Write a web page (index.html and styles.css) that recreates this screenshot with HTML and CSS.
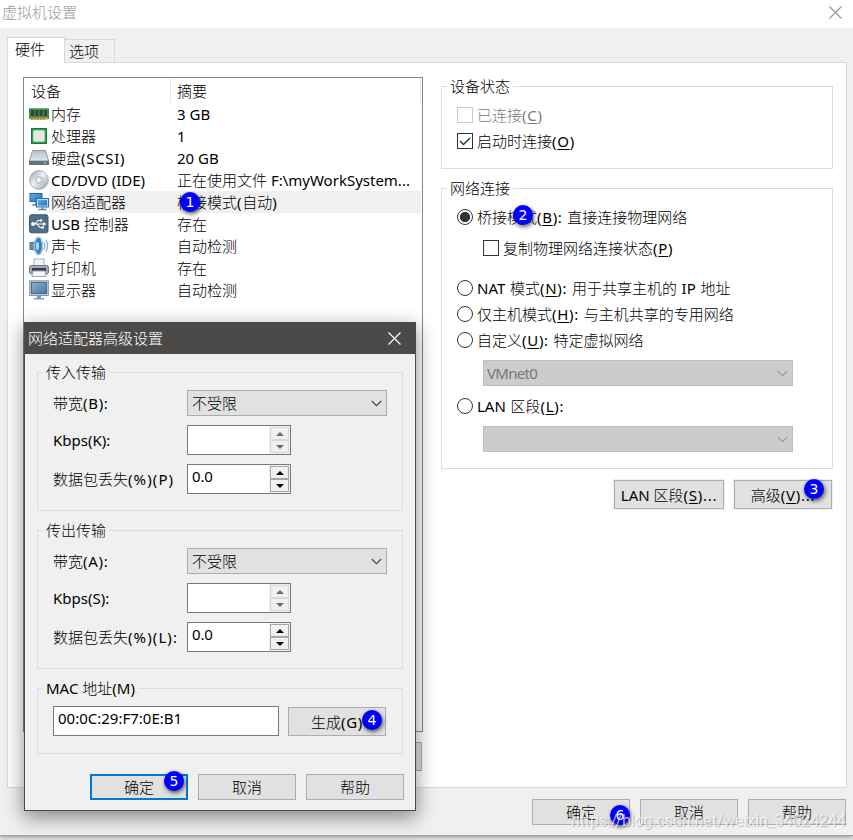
FILE: index.html
```
<!DOCTYPE html>
<html lang="zh-CN">
<head>
<meta charset="utf-8">
<title>虚拟机设置</title>
<link rel="stylesheet" href="styles.css">
</head>
<body>
<svg class="defs" width="0" height="0">
  <defs>
    <linearGradient id="silver" x1="0" y1="0" x2="1" y2="1"><stop offset="0" stop-color="#8d98a5"/><stop offset=".45" stop-color="#eef1f5"/><stop offset="1" stop-color="#929daa"/></linearGradient>
    <linearGradient id="steel" x1="0" y1="0" x2="0" y2="1"><stop offset="0" stop-color="#b4bfca"/><stop offset="1" stop-color="#e0e5ea"/></linearGradient>
    <linearGradient id="blue" x1="0" y1="0" x2="1" y2="1"><stop offset="0" stop-color="#5fb2ee"/><stop offset="1" stop-color="#1f6fb8"/></linearGradient>
    <linearGradient id="slate" x1="0" y1="0" x2="1" y2="1"><stop offset="0" stop-color="#8fb0cf"/><stop offset="1" stop-color="#4a77a3"/></linearGradient>
    <symbol id="chev" viewBox="0 0 11 7"><path d="M.8 1l4.7 4.7L10.2 1" fill="none" stroke="currentColor" stroke-width="1.1"/></symbol>
    <symbol id="cross" viewBox="0 0 13 13"><path d="M.5.5l12 12M12.5.5l-12 12" fill="none" stroke="currentColor" stroke-width="1.2"/></symbol>
  </defs>
</svg>
<div class="window">
  <header class="titlebar"><span>虚拟机设置</span><svg width="13" height="13"><use href="#cross"/></svg></header>
  <main class="client">
    <nav class="tabs"><span class="tab active">硬件</span><span class="tab">选项</span></nav>
    <section class="page">
      <div class="left">
        <div class="list">
          <div class="head"><span class="c1">设备</span><span class="c2">摘要</span></div>
          <div class="row"><svg class="ico" viewBox="0 0 20 20"><rect y="4" width="20" height="11" fill="#2f9048"/><rect y="4" width="20" height="1" fill="#71bf6f"/><path d="M2 6h3v6H2zM6.3 6h3v6h-3zM10.6 6h3v6h-3zM15 6h3v6h-3z" fill="#3d403f"/><path d="M1 13.500h18v2H1z" fill="#d79b3b"/><path d="M3 14v2M6 14v2M9 14v2M12 14v2M15 14v2" stroke="#7d6b30"/></svg><span class="c1">内存</span><span class="c2">3 GB</span></div>
          <div class="row"><svg class="ico" viewBox="0 0 20 20"><rect x="2.5" y="2.5" width="15" height="15" fill="#359a4c" stroke="#1d783c"/><rect x="4.5" y="4.5" width="11" height="11" rx="1" fill="#e4e6e4" stroke="#a5e0ab"/></svg><span class="c1">处理器</span><span class="c2">1</span></div>
          <div class="row"><svg class="ico" viewBox="0 0 20 20"><path d="M3.5 2.500h13L19.500 12.500H.5z" fill="url(#steel)" stroke="#7d8996" stroke-width=".8"/><path d="M0 12h20v5H0z" fill="#637180"/><path d="M.5 12.500h19" stroke="#b3c0cc"/><circle cx="16" cy="15" r="1" fill="#9ed06a"/></svg><span class="c1">硬盘<span class="k">(SCSI)</span></span><span class="c2">20 GB</span></div>
          <div class="row"><svg class="ico" viewBox="0 0 20 20"><circle cx="10" cy="10" r="9.4" fill="url(#silver)" stroke="#a0a8b2" stroke-width=".8"/><circle cx="10" cy="10" r="3.4" fill="#dce2e9" stroke="#9ba5b1" stroke-width=".7"/><circle cx="10" cy="10" r="1.5" fill="#fff"/></svg><span class="c1">CD/DVD (IDE)</span><span class="c2">正在使用文件 F:\myWorkSystem...</span></div>
          <div class="row sel"><svg class="ico" viewBox="0 0 20 20"><rect x="1" y="1.5" width="12" height="8" fill="url(#blue)" stroke="#2a669c"/><path d="M7 10v3H3.500h5" fill="none" stroke="#4483b5" stroke-width="1.3"/><rect x="7.500" y="6.500" width="12" height="8.500" fill="#b8dcf5" stroke="#356f9e"/><rect x="9" y="8" width="9" height="5.500" fill="url(#blue)"/><path d="M9.500 17.500h8M13.500 15v2" stroke="#5487ad" stroke-width="1.500"/></svg><span class="c1">网络适配器</span><span class="c2">桥接模式<span class="k">(</span>自动<span class="k">)</span><em class="badge n1">1</em></span></div>
          <div class="row"><svg class="ico" viewBox="0 0 20 20"><rect x=".5" y=".8" width="18.500" height="18" rx="2" fill="#516e87" stroke="#3c5871"/><path d="M3 10h12M6 10l3-3.500h3M8 10l3 3.500h3" fill="none" stroke="#fff" stroke-width="1.1"/><circle cx="4" cy="10" r="1.900" fill="#fff"/><path d="M14 8l3.500 2-3.500 2z" fill="#fff"/><circle cx="12" cy="6.500" r="1.200" fill="#fff"/><rect x="12.500" y="12.300" width="2.400" height="2.400" fill="#fff"/></svg><span class="c1">USB 控制器</span><span class="c2">存在</span></div>
          <div class="row"><svg class="ico" viewBox="0 0 20 20"><path d="M1 6.500h3.500l5-5.500v18l-5-5.500H1z" fill="#6c8fad" stroke="#466987"/><ellipse cx="9.500" cy="10" rx="4" ry="8.700" fill="#2e81c7" stroke="#a7bfd3" stroke-width="1.400"/><ellipse cx="8.500" cy="10" rx="1.500" ry="4" fill="#b1dcf7"/><path d="M14.800 6q2 4 0 8M17 4q3 6 0 12" fill="none" stroke="#8eabc5" stroke-width="1.200"/></svg><span class="c1">声卡</span><span class="c2">自动检测</span></div>
          <div class="row"><svg class="ico" viewBox="0 0 20 20"><rect x="5" y="1" width="10" height="8" fill="#f3f5fa" stroke="#abafc0"/><rect x=".5" y="7.500" width="19" height="8.500" rx="2" fill="#a4a7b9" stroke="#74778c"/><path d="M3 10h14v3H3z" fill="#39394b"/><path d="M4 13h12l1 5.500H3z" fill="#f5f6fb" stroke="#a3a6b6"/></svg><span class="c1">打印机</span><span class="c2">存在</span></div>
          <div class="row"><svg class="ico" viewBox="0 0 20 20"><rect x=".7" y=".8" width="18.600" height="14.700" fill="#c3d1dc" stroke="#8294a4"/><rect x="2.500" y="2.500" width="15" height="11" fill="url(#slate)" stroke="#426b8f"/><path d="M8 16h4v2h3v1.500H5V18h3z" fill="#7f9cb5"/></svg><span class="c1">显示器</span><span class="c2">自动检测</span></div>
        </div>
        <div class="btn under"></div>
      </div>
      <div class="right">
        <fieldset class="group status"><legend>设备状态</legend>
          <div class="opt off"><i class="box"></i>已连接<span class="k">(<u>C</u>)</span></div>
          <div class="opt"><i class="box"><svg width="14" height="14" viewBox="0 0 14 14"><path d="M2 7l3.500 3.500L12 4" fill="none" stroke="#333" stroke-width="1.500"/></svg></i>启动时连接<span class="k">(<u>O</u>)</span></div>
        </fieldset>
        <fieldset class="group net"><legend>网络连接</legend>
          <div class="opt"><i class="radio on"></i>桥接模式<span class="k">(<u>B</u>):</span> 直接连接物理网络<em class="badge n2">2</em></div>
          <div class="opt inner"><i class="box"></i>复制物理网络连接状态<span class="k">(<u>P</u>)</span></div>
          <div class="opt nat"><i class="radio"></i>NAT 模式<span class="k">(<u>N</u>):</span> 用于共享主机的 IP 地址</div>
          <div class="opt"><i class="radio"></i>仅主机模式<span class="k">(<u>H</u>):</span> 与主机共享的专用网络</div>
          <div class="opt"><i class="radio"></i>自定义<span class="k">(<u>U</u>):</span> 特定虚拟网络</div>
          <div class="select dis"><span class="vm">VMnet0</span><svg width="11" height="7"><use href="#chev"/></svg></div>
          <div class="opt lan"><i class="radio"></i>LAN 区段<span class="k">(<u>L</u>):</span></div>
          <div class="select dis"><svg width="11" height="7"><use href="#chev"/></svg></div>
        </fieldset>
        <div class="pair">
          <div class="btn seg">LAN 区段<span class="k">(<u>S</u>)...</span></div>
          <div class="btn adv">高级<span class="k">(<u>V</u>)...</span><em class="badge n3">3</em></div>
        </div>
      </div>
    </section>
    <footer class="actions"><div class="btn">确定<em class="badge n6">6</em></div><div class="btn">取消</div><div class="btn">帮助</div></footer>
  </main>
</div>

<div class="dialog">
  <header class="dlg-title"><span>网络适配器高级设置</span><svg width="13" height="13"><use href="#cross"/></svg></header>
  <fieldset class="group traffic"><legend>传入传输</legend>
    <div class="field"><label>带宽<span class="k">(B):</span></label><div class="select">不受限<svg width="11" height="7"><use href="#chev"/></svg></div></div>
    <div class="field"><label>Kbps(K):</label><div class="spin dim"><span></span><i><s class="up"></s><s class="dn"></s></i></div></div>
    <div class="field"><label>数据包丢失<span class="k w">(%)(P)</span></label><div class="spin"><span>0.0</span><i><s class="up"></s><s class="dn"></s></i></div></div>
  </fieldset>
  <fieldset class="group traffic"><legend>传出传输</legend>
    <div class="field"><label>带宽<span class="k">(A):</span></label><div class="select">不受限<svg width="11" height="7"><use href="#chev"/></svg></div></div>
    <div class="field"><label>Kbps(S):</label><div class="spin dim"><span></span><i><s class="up"></s><s class="dn"></s></i></div></div>
    <div class="field"><label>数据包丢失<span class="k w">(%)(L):</span></label><div class="spin"><span>0.0</span><i><s class="up"></s><s class="dn"></s></i></div></div>
  </fieldset>
  <fieldset class="group mac"><legend>MAC 地址(M)</legend>
    <div class="macrow"><div class="input">00:0C:29:F7:0E:B1</div><div class="btn">生成<span class="k">(G)</span><em class="badge n4">4</em></div></div>
  </fieldset>
  <footer class="actions"><div class="btn default">确定<em class="badge n5">5</em></div><div class="btn">取消</div><div class="btn">帮助</div></footer>
</div>
<div class="watermark">https://blog.csdn.net/weixin_34024244</div>
</body>
</html>
```
FILE: styles.css
```
* { box-sizing: border-box; }
body {
  margin: 0; width: 853px; height: 840px; overflow: hidden; position: relative;
  background: #e3e3e3; color: #000;
  font: 15px/20px "Noto Sans", "Noto Sans CJK SC Light", "Noto Sans CJK SC", sans-serif;
}
.defs { position: absolute; }
i, em { font-style: normal; }
u { text-underline-offset: 2px; text-decoration-thickness: 1px; }
.k { letter-spacing: .7px; }
.k.w { letter-spacing: 1.1px; }

.window { height: 836px; border-bottom: 1px solid #a2a2a2; background: #f0f0f0; box-shadow: 0 1px 4px #999; display: flex; flex-direction: column; }
.titlebar { height: 28px; background: #fff; color: #999; display: flex; justify-content: space-between; padding: 2px 11px 0 2px; flex: none; }
.titlebar svg { margin-top: 4px; }
.client { padding: 9px 6px 0 7px; }

.tabs { display: flex; align-items: flex-end; height: 26px; margin-bottom: -1px; position: relative; }
.tab { height: 24px; width: 50px; border: 1px solid #d9d9d9; border-left: 0; padding: 1px 0 0 4px; }
.tab.active { height: 26px; width: 58px; background: #fff; border: 1px solid #d9d9d9; border-bottom: 0; padding: 1px 0 0 7px; }
.page { height: 726px; background: #fff; border: 1px solid #d9d9d9; display: flex; padding: 14px 13px 0 15px; }

.left { width: 400px; display: flex; flex-direction: column; align-items: flex-end; }
.list { width: 400px; height: 655px; border: 1px solid #828790; padding-right: 1px; }
.head, .row { display: flex; }
.head { height: 25px; line-height: 26px; padding-left: 7px; border-right: 1px solid #e5e5e5; }
.head .c1 { width: 140px; border-right: 1px solid #e5e5e5; }
.head .c2 { padding-left: 6px; }
.row { height: 22px; line-height: 22px; padding-left: 5px; }
.ico { width: 20px; height: 20px; margin-top: 1px; flex: none; }
.row .c1 { width: 122px; padding-left: 2px; }
.row .c2 { flex: 1; padding-left: 6px; position: relative; white-space: nowrap; }
.sel .c1, .sel .c2 { background: #f0f0f0; }
.under { width: 98px; margin: 10px 1px 0 0; }

.right { width: 392px; margin-left: 18px; }
.group { margin: 0; border: 1px solid #dcdcdc; padding: 0 15px; min-width: 0; position: relative; }
.group legend { padding: 0 3px; height: 20px; margin-left: -10px; }
.status { height: 93px; margin-top: -1px; }
.opt { display: flex; align-items: center; height: 26px; position: relative; white-space: pre; word-spacing: .8px; }
.opt.off { color: #7a7a7a; }
.status .off { margin-top: 6px; }
.box, .radio { width: 16px; height: 16px; border: 1px solid #333; margin-right: 4px; flex: none; }
.off .box { border-color: #ccc; }
.box svg { display: block; }
.radio { border-radius: 50%; }
.radio.on { background: radial-gradient(circle, #333 0 4.700px, #fff 5.500px); }
.net { height: 291px; margin-top: 9px; padding-top: 6px; }
.inner { margin: 5px 0 0 26px; }
.nat { margin-top: 14px; }
.select { display: flex; align-items: center; justify-content: space-between; height: 26px; border: 1px solid #adadad; background: #e1e1e1; padding: 0 4px; color: #000; }
.select svg { color: #444; margin-left: auto; }
.select.dis { width: 310px; margin: 7px 0 0 26px; background: #ccc; border-color: #bfbfbf; color: #777; padding-left: 3px; }
.vm { letter-spacing: -.7px; }
.select.dis svg { color: #9c9c9c; }
.opt.lan { margin-top: 7px; }
.pair { display: flex; justify-content: flex-end; gap: 10px; margin-top: 11px; padding-right: 1px; }

.btn { width: 98px; height: 29px; border: 1px solid #adadad; background: #e1e1e1; display: flex; align-items: center; justify-content: center; white-space: pre; position: relative; flex: none; }
.pair .btn { box-shadow: 0 0 0 1px #f0f0f0; }
.seg { width: 110px; }
.actions { display: flex; justify-content: flex-end; gap: 10px; }
.actions .btn { height: 26px; }
.window .actions { margin: 11px 1px 0 0; }

.dialog { position: absolute; left: 24px; top: 322px; width: 392px; height: 489px; background: #f0f0f0; border: 1px solid #4b4b4b; box-shadow: 0 6px 18px 1px rgba(0,0,0,.42); padding: 0 12px; }
.dlg-title { height: 31px; margin: 0 -12px; background: #4c4a48; color: #fff; display: flex; justify-content: space-between; align-items: center; padding: 0 14px 1px 3px; }
.dialog .group { border-color: #dcdcdc; }
.traffic { height: 149px; margin-top: 8px; padding-top: 8px; }
.traffic + .group { margin-top: 9px; }
.field { display: flex; align-items: center; margin-bottom: 9px; height: 30px; white-space: nowrap; }
.field:nth-of-type(1) { height: 26px; }
.field label { width: 134px; flex: none; }
.field .select { width: 200px; }
.spin { width: 104px; height: 30px; display: flex; border: 1px solid #7a7a7a; background: #fff; }
.spin span { flex: 1; padding: 1px 4px; letter-spacing: -.2px; }
.spin i { width: 21px; background: #f0f0f0; display: flex; flex-direction: column; padding: 1px; }
.spin s { flex: 1; border: 1px solid #a9a9a9; display: flex; align-items: center; justify-content: center; text-decoration: none; }
.spin s::before { content: ""; border: 4px solid transparent; }
.spin .up::before { border-bottom-color: #000; border-top-width: 0; }
.spin .dn::before { border-top-color: #000; border-bottom-width: 0; }
.spin.dim s { border-color: #d8d8d8; }
.spin.dim .up::before { border-bottom-color: #6d6d6d; }
.spin.dim .dn::before { border-top-color: #6d6d6d; }
.mac { height: 76px; padding-top: 8px; }
.macrow { display: flex; gap: 9px; align-items: flex-end; }
.input { width: 226px; height: 30px; border: 1px solid #7a7a7a; background: #fff; padding: 1px 4px; }
.dialog .actions { margin: 20px -1px 0 0; }
.btn.default { border: 2px solid #0078d7; }

.badge { position: absolute; width: 20px; height: 20px; border-radius: 50%; background: #00f; color: #fff; font: 500 14px/20px "DejaVu Sans", sans-serif; text-align: center; box-shadow: 1px 2px 4px rgba(0,0,0,.65); z-index: 2; }
.n1 { left: 9px; top: 1px; }
.n2 { left: 56px; top: 1px; }
.n3 { left: 69px; top: -2px; }
.n4 { left: 73px; top: 2px; }
.n5 { left: 72px; top: -5px; }
.n6 { left: 77px; top: 5px; }
.watermark { position: absolute; left: 571px; top: 811px; font: 16px/20px Roboto, sans-serif; letter-spacing: -.12px; color: rgba(255,255,255,.7); text-shadow: 1px 1px 1px rgba(0,0,0,.22); z-index: 3; white-space: nowrap; }
```
